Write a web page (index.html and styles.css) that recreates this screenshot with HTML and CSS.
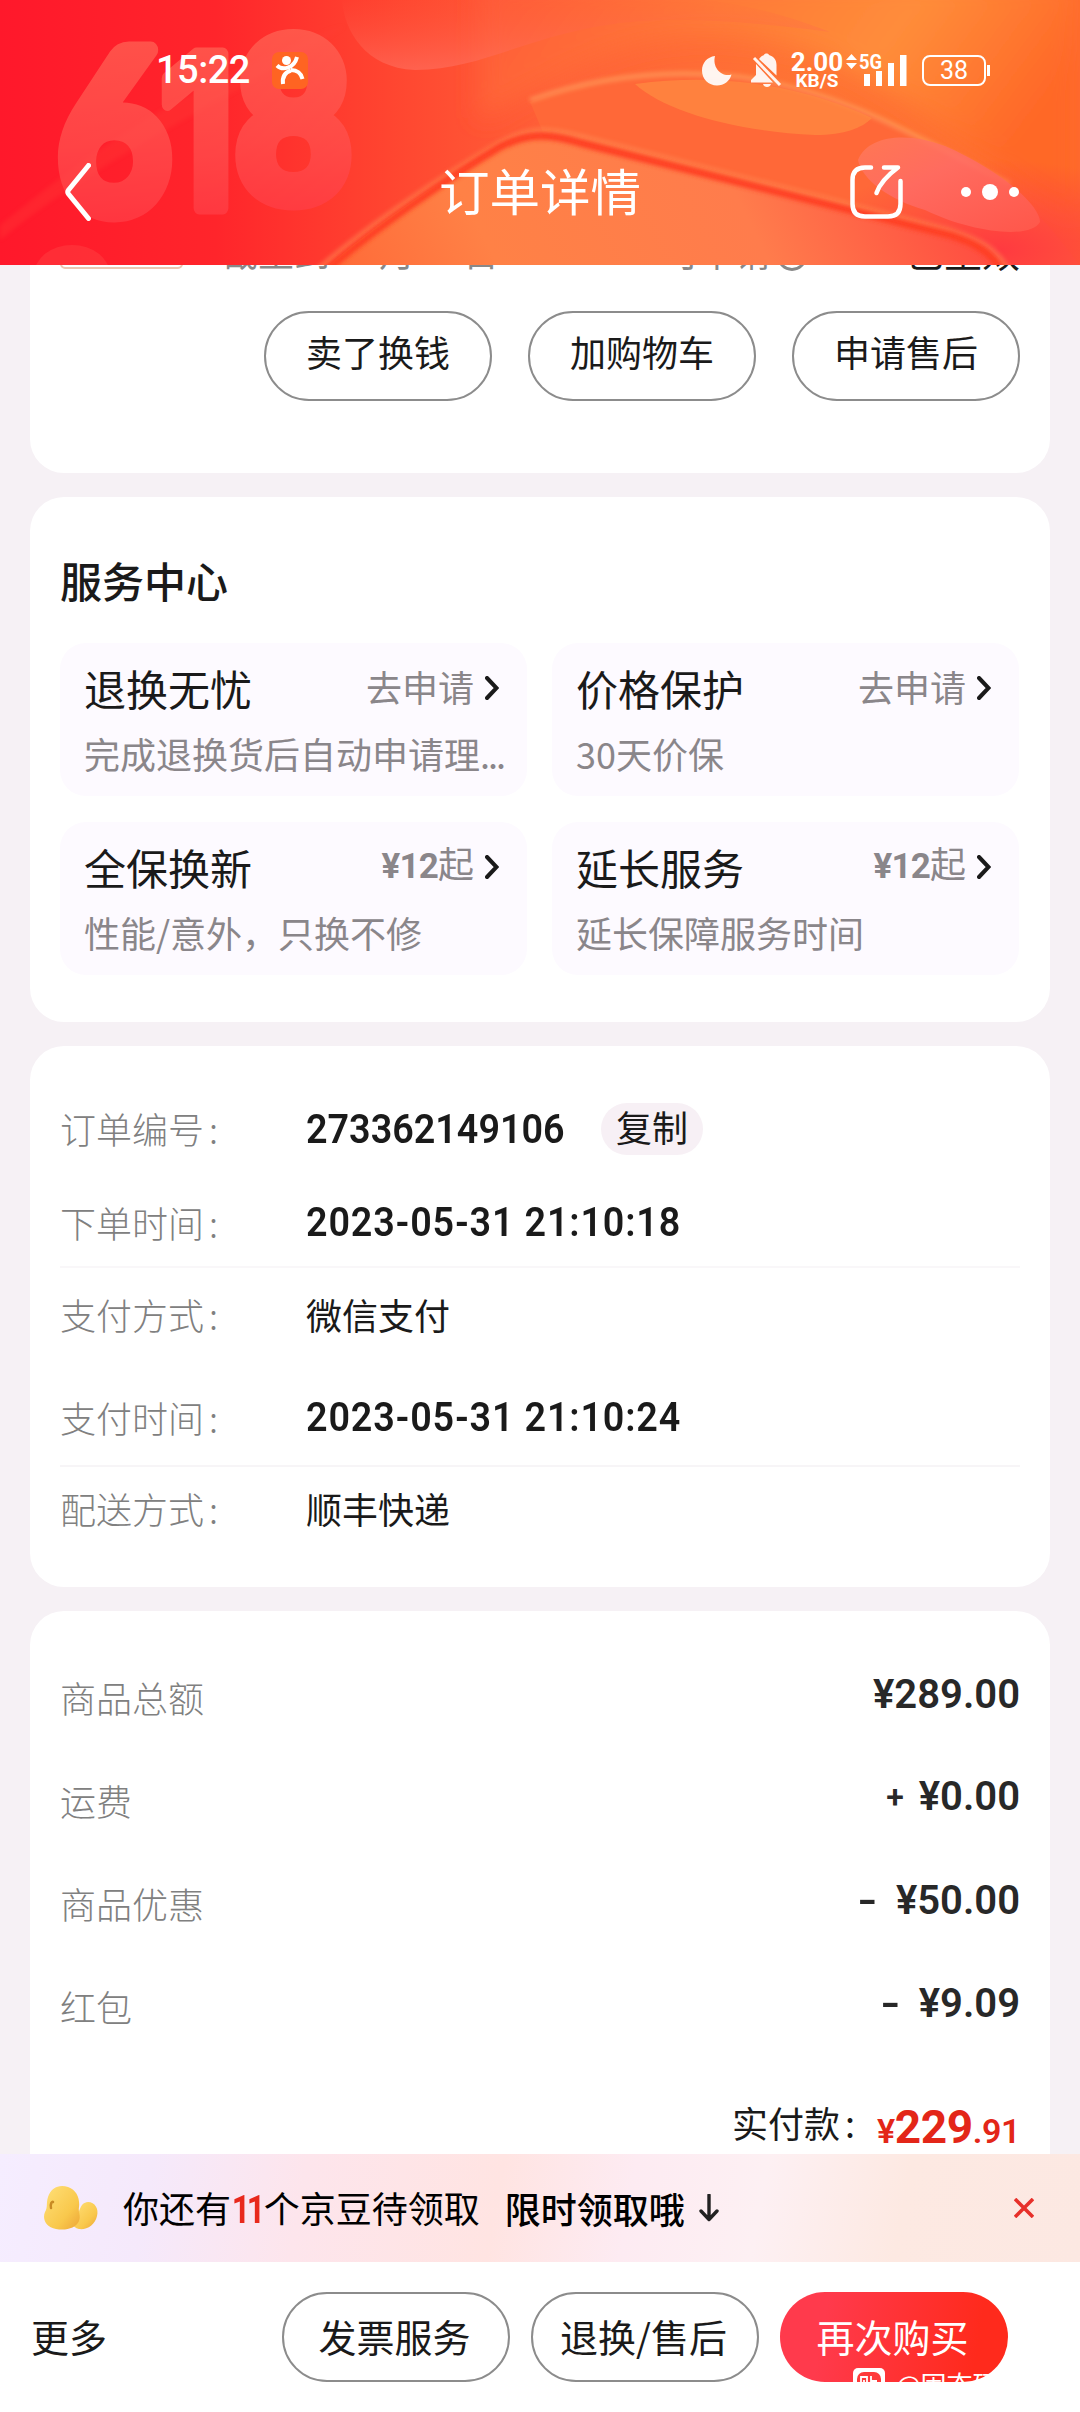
FILE: index.html
```html
<!DOCTYPE html>
<html lang="zh-CN">
<head>
<meta charset="utf-8">
<title>订单详情</title>
<link rel="stylesheet" href="styles.css">
</head>
<body>
<div class="screen">
  <header class="header">
    <svg class="header-art" width="1080" height="265" viewBox="0 0 1080 265">
      <defs>
        <linearGradient id="base" x1="0" y1="0" x2="1" y2="0">
          <stop offset="0" stop-color="#ff182b"/><stop offset=".2" stop-color="#ff252b"/>
          <stop offset=".36" stop-color="#ff4530"/><stop offset=".52" stop-color="#ff6238"/>
          <stop offset=".75" stop-color="#ff7434"/><stop offset="1" stop-color="#ff6a30"/>
        </linearGradient>
        <linearGradient id="hill" x1="0" y1="1" x2="1" y2=".9">
          <stop offset="0" stop-color="#ff6a38"/><stop offset=".25" stop-color="#ff8146"/>
          <stop offset=".65" stop-color="#ff7c4c"/><stop offset="1" stop-color="#ff4a40"/>
        </linearGradient>
        <linearGradient id="top" x1="0" y1="0" x2="1" y2=".3">
          <stop offset="0" stop-color="#ff5838"/><stop offset=".4" stop-color="#ff7a38"/>
          <stop offset=".7" stop-color="#ff8d3a"/><stop offset="1" stop-color="#ff6828"/>
        </linearGradient>
        <radialGradient id="corner" cx=".5" cy=".5" r=".5">
          <stop offset="0" stop-color="#ff3a40"/><stop offset="1" stop-color="#ff3a40" stop-opacity="0"/>
        </radialGradient>
        <linearGradient id="pink" x1="0" y1="0" x2="1" y2="1">
          <stop offset="0" stop-color="#ff7a58"/><stop offset=".4" stop-color="#ff6c66"/><stop offset="1" stop-color="#ff5a4c"/>
        </linearGradient>
        <linearGradient id="blob" x1="0" y1="0" x2="0" y2="1">
          <stop offset="0" stop-color="#ff5840" stop-opacity="0"/><stop offset="1" stop-color="#ff7262"/>
        </linearGradient>
        <linearGradient id="digits" x1="0" y1="-170" x2="0" y2="10" gradientUnits="userSpaceOnUse">
          <stop offset="0" stop-color="#ff6656"/><stop offset=".6" stop-color="#ff5250"/><stop offset="1" stop-color="#ff3f48"/>
        </linearGradient>
        <filter id="soft" x="-10%" y="-10%" width="120%" height="120%"><feGaussianBlur stdDeviation="2"/></filter>
        <filter id="softer" x="-20%" y="-20%" width="140%" height="140%"><feGaussianBlur stdDeviation="12"/></filter>
      </defs>
      <rect width="1080" height="265" fill="url(#base)"/>
      <path d="M0 225C60 180 130 110 330 30L345 26C250 90 110 150 0 240Z" fill="#ff4038" opacity=".3" filter="url(#soft)"/>
      <path d="M480 120C570 70 640 20 760 40C900 60 980 180 1080 220V-20H480Z" fill="url(#top)" filter="url(#softer)"/>
      <path d="M342 0C344 30 365 68 415 70C480 69 520 40 600 26C660 15 740 20 830 32C700 -20 600 0 540 0Z" fill="url(#blob)" opacity=".6"/>
      <path d="M530 102C610 72 680 70 740 77C850 92 930 145 1000 182C1030 200 1060 240 1080 265H600Z" fill="#ff6838"/>
      <path d="M530 100C610 72 680 70 740 77C850 92 930 145 1010 184" fill="none" stroke="#ff9c5c" stroke-width="5" opacity=".7" filter="url(#soft)"/>
      <path d="M635 84C665 112 740 132 815 135C845 135 862 128 872 118C820 94 740 70 635 84Z" fill="#ff8a40" opacity=".75"/>
      <ellipse cx="1000" cy="250" rx="190" ry="90" fill="url(#corner)"/>
      <path d="M858 160C868 134 910 132 945 146C1000 170 1040 205 1040 222C1030 240 970 232 925 210C890 200 862 180 858 160Z" fill="url(#pink)" opacity=".85"/>
      <path d="M330 265C380 220 450 176 500 146C530 130 550 132 580 142L950 232C975 240 995 250 1005 270H330Z" fill="url(#hill)"/>
      <path d="M318 270C370 224 450 172 500 143C530 127 550 129 580 137L950 231C980 240 998 250 1008 272" fill="none" stroke="#ff9158" stroke-width="6" opacity=".55" filter="url(#soft)"/>
      <path d="M325 272C370 232 450 177 500 147C530 132 550 134 580 143L950 235C975 243 992 252 1002 272" fill="none" stroke="#ff3c22" stroke-width="7" filter="url(#soft)"/>
      <ellipse cx="72" cy="275" rx="38" ry="30" fill="#ff4848" opacity=".4"/>
      <g class="promo" fill="url(#digits)" stroke="url(#digits)">
        <text class="lato" transform="translate(57 212) scale(.93 1.06)">6</text>
        <text transform="translate(159 208) scale(.86 1)">1</text>
        <text class="lato" transform="translate(235 200) scale(.95 1.05)">8</text>
      </g>
    </svg>

    <div class="status">
      <span class="clock">15:22</span>
      <svg class="app-icon" width="36" height="37" viewBox="0 0 36 37">
        <rect width="36" height="37" rx="7" fill="#ff6422"/>
        <circle cx="14.500" cy="8.500" r="4.500" fill="#fff"/>
        <g fill="none" stroke="#fff" stroke-width="4"><path d="M5 13.500C10 18.500 22 17 25 5"/><path d="M11 32C10 24 14 20 19 18.500"/><path d="M19 18C25 18 29 21 30.500 27"/></g>
      </svg>
      <div class="status-right">
        <svg width="30" height="31" viewBox="0 0 30 31"><path d="M13 1C5 2 0 8 0 15.500C0 24 6.500 30.500 15 30.500C22 30.500 28 26 29.500 19.500C20 22.500 10 13 13 1Z" fill="#fff" opacity=".92"/></svg>
        <svg class="bell" width="31" height="35" viewBox="0 0 31 35"><g fill="#fff" opacity=".92"><path d="M8 6C10 3 12 2.500 13 2C13.500 0 17.500 0 18 2C23 3.500 25.500 7 25.500 12V22.500Z"/><path d="M5 11L22 29.500H0V27L5 22Z"/><path d="M12 31H20C19 35 13 35 12 31Z"/></g><path d="M3 5L29 32" stroke="#fff" stroke-width="3" opacity=".92"/></svg>
        <div class="speed"><b>2.00</b><span>KB/S</span></div>
        <svg class="signal" width="62" height="33" viewBox="0 0 62 33"><g fill="#fff"><path d="M0 6L5.500 0L11 6ZM0 9H11L5.500 15Z"/><rect x="18" y="20" width="6" height="12"/><rect x="30" y="17" width="6" height="15"/><rect x="42" y="9" width="6" height="23"/><rect x="54" y="1" width="6.500" height="31"/></g><text x="13" y="14.500" class="net" textLength="23" lengthAdjust="spacingAndGlyphs">5G</text></svg>
        <div class="battery"><span>38</span></div>
      </div>
    </div>

    <nav class="nav">
      <svg class="back" width="26" height="58" viewBox="0 0 26 58"><path d="M23.500 2.500L3.500 27Q2 29 3.500 31L23.500 55.500" fill="none" stroke="#fff" stroke-width="5" stroke-linecap="round" stroke-linejoin="round"/></svg>
      <h1>订单详情</h1>
      <svg class="share" width="54" height="54" viewBox="0 0 54 54"><path d="M21 2.500H15Q2.500 2.500 2.500 15V39Q2.500 51.500 15 51.500H38Q50.500 51.500 50.500 39V16M34 2.500H48Q31 15 26.500 28" fill="none" stroke="#fff" stroke-width="4.500" stroke-linecap="round" stroke-linejoin="round"/></svg>
      <svg class="dots" width="60" height="18" viewBox="0 0 60 18"><g fill="#fff"><circle cx="6" cy="9" r="5"/><circle cx="30" cy="9" r="8"/><circle cx="54" cy="9" r="5"/></g></svg>
    </nav>
  </header>

  <main class="content">
    <section class="card goods">
      <div class="warranty">
        <span class="tag"></span>
        <span class="until">截至到</span><span class="month">月</span><span class="day">日</span><span class="apply">可申请</span>
        <span class="info"></span>
        <span class="state">已生效</span>
      </div>
      <div class="pills">
        <button class="pill">卖了换钱</button><button class="pill">加购物车</button><button class="pill">申请售后</button>
      </div>
    </section>

    <section class="card services">
      <h2>服务中心</h2>
      <div class="tiles">
        <div class="tile"><div class="tile-head"><h3>退换无忧</h3><span>去申请</span><svg class="chev" width="14" height="24" viewBox="0 0 14 24"><path d="M2 2L11.500 12L2 22"/></svg></div><p>完成退换货后自动申请理<span class="more-dots">...</span></p></div>
        <div class="tile"><div class="tile-head"><h3>价格保护</h3><span>去申请</span><svg class="chev" width="14" height="24" viewBox="0 0 14 24"><path d="M2 2L11.500 12L2 22"/></svg></div><p>30天价保</p></div>
        <div class="tile"><div class="tile-head"><h3>全保换新</h3><span><b>¥12</b>起</span><svg class="chev" width="14" height="24" viewBox="0 0 14 24"><path d="M2 2L11.500 12L2 22"/></svg></div><p>性能/意外，只换不修</p></div>
        <div class="tile"><div class="tile-head"><h3>延长服务</h3><span><b>¥12</b>起</span><svg class="chev" width="14" height="24" viewBox="0 0 14 24"><path d="M2 2L11.500 12L2 22"/></svg></div><p>延长保障服务时间</p></div>
      </div>
    </section>

    <section class="card order">
      <div class="field first"><span class="label">订单编号<i>:</i></span><span class="num order-no">273362149106</span><button class="copy">复制</button></div>
      <div class="field second"><span class="label">下单时间<i>:</i></span><span class="num date">2023-05-31 21:10:18</span></div>
      <div class="field third"><span class="label">支付方式<i>:</i></span><span class="value">微信支付</span></div>
      <div class="field fourth"><span class="label">支付时间<i>:</i></span><span class="num date">2023-05-31 21:10:24</span></div>
      <div class="field fifth"><span class="label">配送方式<i>:</i></span><span class="value">顺丰快递</span></div>
    </section>

    <section class="card bill">
      <div class="line"><span class="label">商品总额</span><span class="amount">¥289.00</span></div>
      <div class="line"><span class="label">运费</span><span class="amount"><i class="plus">+</i>¥0.00</span></div>
      <div class="line"><span class="label">商品优惠</span><span class="amount"><i class="minus">-</i>¥50.00</span></div>
      <div class="line"><span class="label">红包</span><span class="amount"><i class="minus">-</i>¥9.09</span></div>
      <div class="total"><span>实付款<i>:</i></span><strong><small>¥</small>229<small>.91</small></strong></div>
    </section>
  </main>

  <aside class="notice">
    <svg class="beans" width="56" height="46" viewBox="0 0 56 46">
      <defs><linearGradient id="bean" x1="0" y1="0" x2="1" y2="1"><stop offset="0" stop-color="#ffe078"/><stop offset=".65" stop-color="#f9c84c"/><stop offset="1" stop-color="#eda536"/></linearGradient></defs>
      <path d="M33 30C38 27 36 18 45 17C52 17 56 24 54 31C52 40 44 45 36 44C29 43 27 35 33 30Z" fill="url(#bean)"/>
      <path d="M5 12C8 2 17 -1 25 2C34 5 37 14 36 22C35 28 38 30 36 36C33 43 23 46 13 44C3 42 -1 34 2 27C5 22 3 18 5 12Z" fill="url(#bean)"/>
      <path d="M8 23C7 19 9 16 10 17" fill="none" stroke="#c98b24" stroke-width="2.500" stroke-linecap="round"/>
    </svg>
    <p>你还有<b>11</b>个京豆待领取</p><strong>限时领取哦</strong>
    <svg class="down" width="20" height="28" viewBox="0 0 20 28"><path d="M10 1V25M2 17L10 25.500L18 17" fill="none" stroke="#222" stroke-width="3.400" stroke-linejoin="round" stroke-linecap="round"/></svg>
    <svg class="close" width="20" height="20" viewBox="0 0 20 20"><path d="M1 1L19 19M19 1L1 19" stroke="#e7302a" stroke-width="3.600"/></svg>
  </aside>

  <footer class="actions">
    <span class="more">更多</span>
    <button class="pill">发票服务</button>
    <button class="pill">退换/售后</button>
    <div class="buy-wrap">
      <button class="pill buy">再次购买</button>
      <div class="mark">
        <svg width="32" height="32" viewBox="0 0 32 32"><rect width="32" height="32" rx="5" fill="#fff"/><rect x="4" y="4" width="24" height="24" rx="7" fill="#ff3a3a"/><path d="M8 20V9H14V20M11 12V17L8 22M18 8V22M18 13H24M16 17H23V23H17" fill="none" stroke="#fff" stroke-width="1.800"/><rect y="14" width="32" height="18" fill="#fff"/></svg>
        <span>@固态硬</span>
      </div>
    </div>
  </footer>
</div>
</body>
</html>
```
FILE: styles.css
```css
* { box-sizing: border-box; margin: 0; padding: 0; }
body { background: #f6f1f5; }
.screen {
  width: 1080px; height: 2412px; overflow: hidden;
  display: flex; flex-direction: column;
  font-family: "Noto Sans CJK SC", sans-serif; font-size: 36px; color: #1a1a1a;
}
button { font: inherit; color: inherit; background: none; border: 0; }
svg { display: block; flex: none; }
i { font-style: normal; }

.header { position: relative; z-index: 2; height: 265px; flex: none; color: #fff; overflow: hidden; }
.header-art { position: absolute; left: 0; top: 0; z-index: -1; }
.promo { font: 600 212px Inter, sans-serif; stroke-width: 13px; stroke-linejoin: round; opacity: .72; }
.promo .lato { font-family: Lato, sans-serif; font-weight: 700; stroke-width: 16px; }
.status { display: flex; align-items: center; height: 140px; padding: 0 94px 0 156px; }
.clock { width: 116px; font: 500 38px/40px Roboto, sans-serif; letter-spacing: -.5px; }
.status-right { margin-left: auto; display: flex; align-items: center; }
.bell { margin-left: 19px; }
.speed { width: 54px; margin: 0 0 0 8px; display: flex; flex-direction: column; align-items: center; font-family: Roboto, sans-serif; }
.speed b { font-size: 26px; line-height: 20px; font-weight: 700; }
.speed span { font-size: 19px; line-height: 17px; font-weight: 700; }
.signal { margin-left: 2px; }
.net { font: 700 20px Roboto, sans-serif; fill: #fff; }
.battery {
  position: relative; width: 64px; height: 31px; margin-left: 14px;
  border: 2px solid #fff; border-radius: 8px;
  display: flex; align-items: center; justify-content: center;
  font: 400 25px/27px Roboto, sans-serif;
}
.battery::after { content: ""; position: absolute; right: -6px; top: 8px; width: 3px; height: 11px; background: #fff; }

.nav { display: grid; grid-template-columns: 374px 412px 53px 60px; align-items: center; height: 104px; padding-left: 65px; }
.nav h1 { font-size: 50.500px; line-height: 60px; font-weight: 400; padding-bottom: 6px; }
.share { justify-self: end; }
.dots { margin-left: 56px; }

.content { height: 1889px; flex: none; overflow: hidden; padding: 0 30px; display: flex; flex-direction: column; gap: 24px; }
.card { background: #fff; border-radius: 34px; flex: none; }

.goods { height: 208px; border-radius: 0 0 34px 34px; padding: 0 30px; }
.warranty { display: flex; height: 46px; margin-top: -34px; line-height: 40px; color: #888; margin-bottom: 34px; }
.tag { width: 123px; height: 38px; border: 2px solid #edc6b2; border-radius: 5px; margin-right: 39px; }
.until { width: 157px; } .month { width: 84px; } .day { width: 200px; } .apply { width: 114px; }
.info { width: 30px; height: 30px; border: 3px solid #888; border-radius: 50%; margin-top: 10px; }
.state { margin-left: auto; color: #1a1a1a; font-size: 38px; }
.pills { display: flex; justify-content: flex-end; gap: 36px; }
.pill { width: 228px; height: 90px; border: 2px solid #8c8c8c; border-radius: 45px; line-height: 80px; padding-bottom: 8px; }
.pills .pill { padding-bottom: 9px; line-height: 77px; }

.services { height: 525px; padding: 55px 30px 0; }
.services h2 { font-size: 42px; line-height: 56px; font-weight: 500; }
.tiles { display: grid; grid-template-columns: 467px 467px; column-gap: 25px; row-gap: 26px; margin-top: 35px; }
.tile { height: 153px; border-radius: 26px; background: #fdfaff; padding: 18px 24px 0; }
.tile-head { display: flex; align-items: center; height: 54px; }
.tile h3 { flex: 1; font-size: 42px; font-weight: 400; line-height: 54px; padding-bottom: 1px; }
.tile-head span { color: #8a868a; line-height: 50px; margin-bottom: 5px; margin-right: 11px; }
.tile-head b { font-family: Roboto, sans-serif; font-weight: 700; font-size: 35px; letter-spacing: -.8px; }
.chev { fill: none; stroke: #1a1a1a; stroke-width: 4; stroke-linecap: round; margin-right: 4px; }
.tile p { font-size: 36px; line-height: 50px; margin-top: 13px; color: #8a868a; white-space: nowrap; }
.more-dots { letter-spacing: -2px; }

.order { height: 541px; padding: 36px 30px 0; }
.field { display: flex; align-items: center; height: 94px; }
.first .label { padding-bottom: 2px; }
.second { height: 92px; border-bottom: 2px solid #f9f7f9; padding-top: 2px; }
.third { height: 99px; padding-bottom: 7px; }
.fourth { height: 100px; border-bottom: 2px solid #f7f5f7; padding-top: 2px; }
.fifth { height: 87px; padding-bottom: 6px; }
.label { font-weight: 300; color: #808080; }
.label i { margin-left: 5px; }
.field .label { width: 246px; flex: none; }
.num { font: 600 41px/48px Roboto, sans-serif; transform: scaleX(.92); transform-origin: left; white-space: nowrap; }
.date { letter-spacing: .9px; }
.order-no { width: 295px; }
.copy { width: 102px; height: 52px; border-radius: 26px; background: #f7f0f5; line-height: 46px; padding-bottom: 6px; }

.bill { height: 600px; padding: 34px 30px 0; }
.line { display: flex; align-items: center; justify-content: space-between; height: 103px; }
.amount { font: 600 40px/48px Roboto, sans-serif; color: #282828; padding-bottom: 3px; }
.plus { font-size: 32px; margin-right: 15px; position: relative; top: -2px; }
.minus { display: inline-block; transform: scaleX(1.35); margin-right: 21px; }
.total { display: flex; align-items: baseline; justify-content: flex-end; height: 60px; margin-top: 38px; line-height: 60px; }
.total span { margin-right: 22px; position: relative; top: -3px; }
.total i { margin-left: 5px; }
.total strong { font: 700 46px/60px Roboto, sans-serif; color: #e32618; position: relative; top: 2px; letter-spacing: -.4px; }
.total small { font-size: 34px; font-weight: 600; }

.notice {
  height: 108px; flex: none; display: flex; align-items: center; padding: 0 46px 0 43px; color: #000;
  background: linear-gradient(100deg, #f5edff 0, #f5e9fb 14%, #fde5ec 28%, #ffe4e2 46%, #fdebf2 58%, #fdf0f3 70%, #fde9e2 83%, #fce8e2 100%);
}
.notice p { margin: 0 25px 0 24px; line-height: 50px; }
.notice b { color: #e8291c; font-family: Roboto, sans-serif; font-weight: 700; font-size: 38px; display: inline-block; letter-spacing: -4px; transform: scaleX(.85); margin: 0 -1px 0 -2px; }
.notice strong { font-weight: 500; line-height: 50px; }
.down { margin-left: 14px; }
.close { margin-left: auto; }

.actions { height: 150px; flex: none; background: #fff; display: flex; align-items: flex-start; padding: 30px 72px 0 31px; font-size: 38px; }
.more { flex: 1; line-height: 88px; }
.actions .pill { margin-right: 21px; line-height: 83px; padding: 0 3px 4px 0; }
.buy-wrap { position: relative; width: 228px; }
.actions .buy { border: 0; color: #fff; margin: 0; background: linear-gradient(100deg, #ff3a4c 20%, #ff2a1c 85%); }
.mark { position: absolute; left: 73px; top: 76px; display: flex; gap: 11px; color: #fff; font-size: 26px; line-height: 32px; white-space: nowrap; }
```
